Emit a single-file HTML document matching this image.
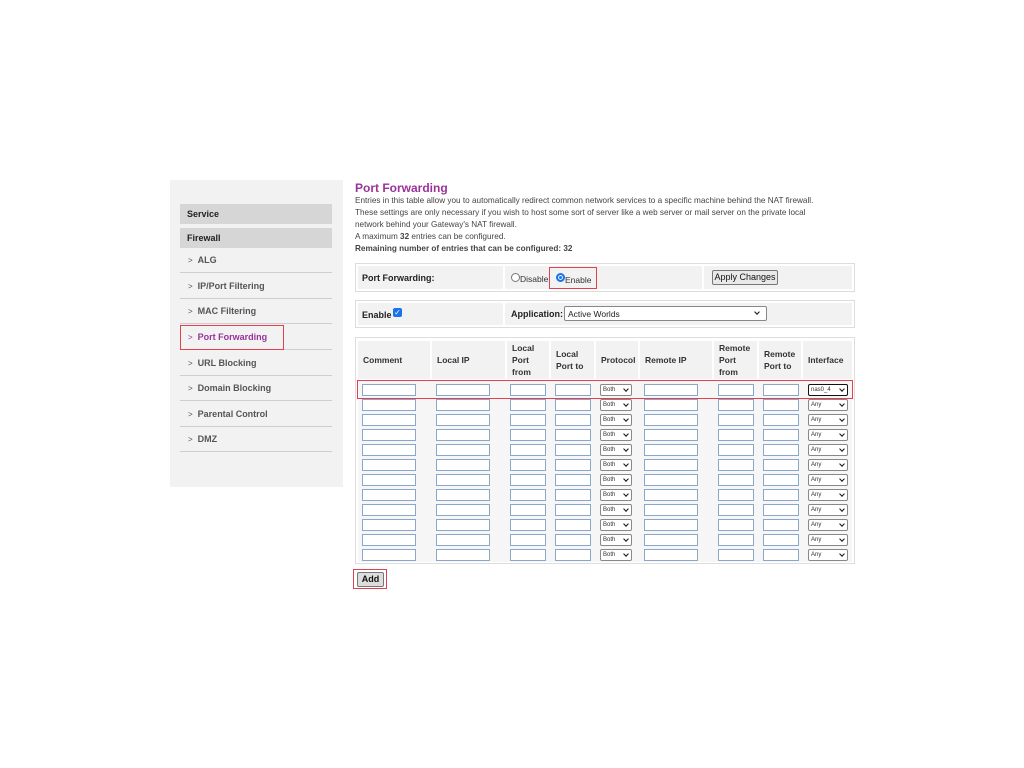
<!DOCTYPE html>
<html><head><meta charset="utf-8"><style>
*{box-sizing:border-box;margin:0;padding:0}
body{width:1024px;height:768px;background:#fff;font-family:"Liberation Sans",Arial,sans-serif;color:#333;position:relative;overflow:hidden}
.a{position:absolute}
#side{left:170px;top:180px;width:173px;height:307px;background:#f2f2f2}
.bar{position:absolute;left:180px;width:152px;height:20px;background:#d6d6d6;font-size:9px;font-weight:bold;color:#222;padding:5px 0 0 7px}
.it{position:absolute;left:180px;width:152px;height:25px;border-bottom:1px solid #cfcfcf;font-size:9px;font-weight:bold;color:#555;padding:0 0 0 8px;line-height:24px}
.it b{font-weight:normal;font-size:8px;margin-right:5px}
.t{font-size:8.2px;color:#444;line-height:12px;left:355px}
.box{position:absolute;left:355px;width:500px;border:1px solid #ddd;background:#fff}
.cell{position:absolute;background:#f2f2f2}
.rb{position:absolute;border:1px solid #e04050}
.btn{position:absolute;background:#e9e9e9;border:1px solid #777;border-radius:2px;font-size:9px;color:#111;text-align:center}
.h{position:absolute;top:341px;height:38px;background:#f2f2f2;font-size:8.5px;font-weight:bold;color:#333;display:flex;align-items:center;padding-left:5px;line-height:12px}
.r{position:absolute;left:0;width:1024px;height:15px}
.r i{position:absolute;top:2px;height:12px;border:1px solid #8aa7c7;background:#fff}
.r s{position:absolute;top:2px;height:12px;border:1px solid #888;border-radius:2px;background:#fff;font-size:6px;text-decoration:none;color:#333;padding-left:2px;line-height:10px}
.r s:after{content:"";position:absolute;right:3px;top:2px;width:3px;height:3px;border:solid #111;border-width:0 1.5px 1.5px 0;transform:rotate(45deg)}
.r .c1{left:362px;width:54px}.r .c2{left:436px;width:54px}.r .c3{left:510px;width:36px}.r .c4{left:555px;width:36px}
.r .c5{left:600px;width:32px}.r .c6{left:644px;width:54px}.r .c7{left:718px;width:36px}.r .c8{left:763px;width:36px}.r .c9{left:808px;width:40px}
</style></head><body>
<div id="side" class="a"></div>
<div class="bar" style="top:204px">Service</div>
<div class="bar" style="top:228px">Firewall</div>
<div class="it" style="top:248px"><b>&gt;</b>ALG</div>
<div class="it" style="top:274px"><b>&gt;</b>IP/Port Filtering</div>
<div class="it" style="top:299px"><b>&gt;</b>MAC Filtering</div>
<div class="it" style="top:325px;color:#993399"><b>&gt;</b>Port Forwarding</div>
<div class="it" style="top:351px"><b>&gt;</b>URL Blocking</div>
<div class="it" style="top:376px"><b>&gt;</b>Domain Blocking</div>
<div class="it" style="top:402px"><b>&gt;</b>Parental Control</div>
<div class="it" style="top:427px"><b>&gt;</b>DMZ</div>
<div class="rb" style="left:180px;top:325px;width:104px;height:25px"></div>

<div class="a" style="left:355px;top:181px;font-size:12px;font-weight:bold;color:#993399">Port Forwarding</div>
<div class="a t" style="top:195px">Entries in this table allow you to automatically redirect common network services to a specific machine behind the NAT firewall.<br>These settings are only necessary if you wish to host some sort of server like a web server or mail server on the private local<br>network behind your Gateway's NAT firewall.<br>A maximum <b>32</b> entries can be configured.<br><b>Remaining number of entries that can be configured: 32</b></div>

<div class="box" style="top:263px;height:29px"></div>
<div class="cell" style="left:358px;top:266px;width:145px;height:23px"></div>
<div class="cell" style="left:505px;top:266px;width:197px;height:23px"></div>
<div class="cell" style="left:704px;top:266px;width:148px;height:23px"></div>
<div class="a" style="left:362px;top:273px;font-size:9px;font-weight:bold;color:#222">Port Forwarding:</div>
<div class="a" style="left:511px;top:273px;width:9px;height:9px;border:1px solid #777;border-radius:50%;background:#fff"></div>
<div class="a" style="left:520px;top:274px;font-size:8.5px;color:#333">Disable</div>
<div class="a" style="left:556px;top:273px;width:9px;height:9px;border:2px solid #1a73e8;border-radius:50%;background:#1a73e8;box-shadow:inset 0 0 0 1px #fff"></div>
<div class="a" style="left:565px;top:275px;font-size:8.5px;color:#333">Enable</div>
<div class="rb" style="left:549px;top:267px;width:48px;height:22px"></div>
<div class="btn" style="left:712px;top:270px;width:66px;height:15px;line-height:13px">Apply Changes</div>

<div class="box" style="top:300px;height:28px"></div>
<div class="cell" style="left:358px;top:303px;width:145px;height:22px"></div>
<div class="cell" style="left:505px;top:303px;width:347px;height:22px"></div>
<div class="a" style="left:362px;top:310px;font-size:9px;font-weight:bold;color:#222">Enable</div>
<div class="a" style="left:393px;top:308px;width:9px;height:9px;background:#1a73e8;border-radius:2px;color:#fff;font-size:8px;line-height:9px;text-align:center">✓</div>
<div class="a" style="left:511px;top:309px;font-size:9px;font-weight:bold;color:#222">Application:</div>
<div class="a" style="left:564px;top:306px;width:203px;height:15px;border:1px solid #888;border-radius:2px;background:#fff;font-size:8.5px;padding:2px 0 0 3px;color:#222">Active Worlds</div>
<div class="a" style="left:755px;top:310px;width:4px;height:4px;border:solid #111;border-width:0 1.5px 1.5px 0;transform:rotate(45deg)"></div>

<div class="box" style="top:337px;height:227px"></div>
<div class="h" style="left:358px;width:72px">Comment</div>
<div class="h" style="left:432px;width:73px">Local IP</div>
<div class="h" style="left:507px;width:42px">Local<br>Port<br>from</div>
<div class="h" style="left:551px;width:43px">Local<br>Port to</div>
<div class="h" style="left:596px;width:42px">Protocol</div>
<div class="h" style="left:640px;width:72px">Remote IP</div>
<div class="h" style="left:714px;width:43px">Remote<br>Port<br>from</div>
<div class="h" style="left:759px;width:42px">Remote<br>Port to</div>
<div class="h" style="left:803px;width:49px">Interface</div>
<div class="cell" style="left:358px;top:381px;width:494px;height:181px;background:#f6f6f6"></div>

<div class="r" style="top:382px"><i class="c1"></i><i class="c2"></i><i class="c3"></i><i class="c4"></i><s class="c5">Both</s><i class="c6"></i><i class="c7"></i><i class="c8"></i><s class="c9" style="border:1.5px solid #111">nas0_4</s></div>
<div class="r" style="top:397px"><i class="c1"></i><i class="c2"></i><i class="c3"></i><i class="c4"></i><s class="c5">Both</s><i class="c6"></i><i class="c7"></i><i class="c8"></i><s class="c9">Any</s></div>
<div class="r" style="top:412px"><i class="c1"></i><i class="c2"></i><i class="c3"></i><i class="c4"></i><s class="c5">Both</s><i class="c6"></i><i class="c7"></i><i class="c8"></i><s class="c9">Any</s></div>
<div class="r" style="top:427px"><i class="c1"></i><i class="c2"></i><i class="c3"></i><i class="c4"></i><s class="c5">Both</s><i class="c6"></i><i class="c7"></i><i class="c8"></i><s class="c9">Any</s></div>
<div class="r" style="top:442px"><i class="c1"></i><i class="c2"></i><i class="c3"></i><i class="c4"></i><s class="c5">Both</s><i class="c6"></i><i class="c7"></i><i class="c8"></i><s class="c9">Any</s></div>
<div class="r" style="top:457px"><i class="c1"></i><i class="c2"></i><i class="c3"></i><i class="c4"></i><s class="c5">Both</s><i class="c6"></i><i class="c7"></i><i class="c8"></i><s class="c9">Any</s></div>
<div class="r" style="top:472px"><i class="c1"></i><i class="c2"></i><i class="c3"></i><i class="c4"></i><s class="c5">Both</s><i class="c6"></i><i class="c7"></i><i class="c8"></i><s class="c9">Any</s></div>
<div class="r" style="top:487px"><i class="c1"></i><i class="c2"></i><i class="c3"></i><i class="c4"></i><s class="c5">Both</s><i class="c6"></i><i class="c7"></i><i class="c8"></i><s class="c9">Any</s></div>
<div class="r" style="top:502px"><i class="c1"></i><i class="c2"></i><i class="c3"></i><i class="c4"></i><s class="c5">Both</s><i class="c6"></i><i class="c7"></i><i class="c8"></i><s class="c9">Any</s></div>
<div class="r" style="top:517px"><i class="c1"></i><i class="c2"></i><i class="c3"></i><i class="c4"></i><s class="c5">Both</s><i class="c6"></i><i class="c7"></i><i class="c8"></i><s class="c9">Any</s></div>
<div class="r" style="top:532px"><i class="c1"></i><i class="c2"></i><i class="c3"></i><i class="c4"></i><s class="c5">Both</s><i class="c6"></i><i class="c7"></i><i class="c8"></i><s class="c9">Any</s></div>
<div class="r" style="top:547px"><i class="c1"></i><i class="c2"></i><i class="c3"></i><i class="c4"></i><s class="c5">Both</s><i class="c6"></i><i class="c7"></i><i class="c8"></i><s class="c9">Any</s></div>
<div class="rb" style="left:357px;top:380px;width:496px;height:19px"></div>

<div class="btn" style="left:357px;top:572px;width:27px;height:15px;line-height:13px;font-weight:bold;background:#ddd">Add</div>
<div class="rb" style="left:353px;top:569px;width:34px;height:20px"></div>
</body></html>
